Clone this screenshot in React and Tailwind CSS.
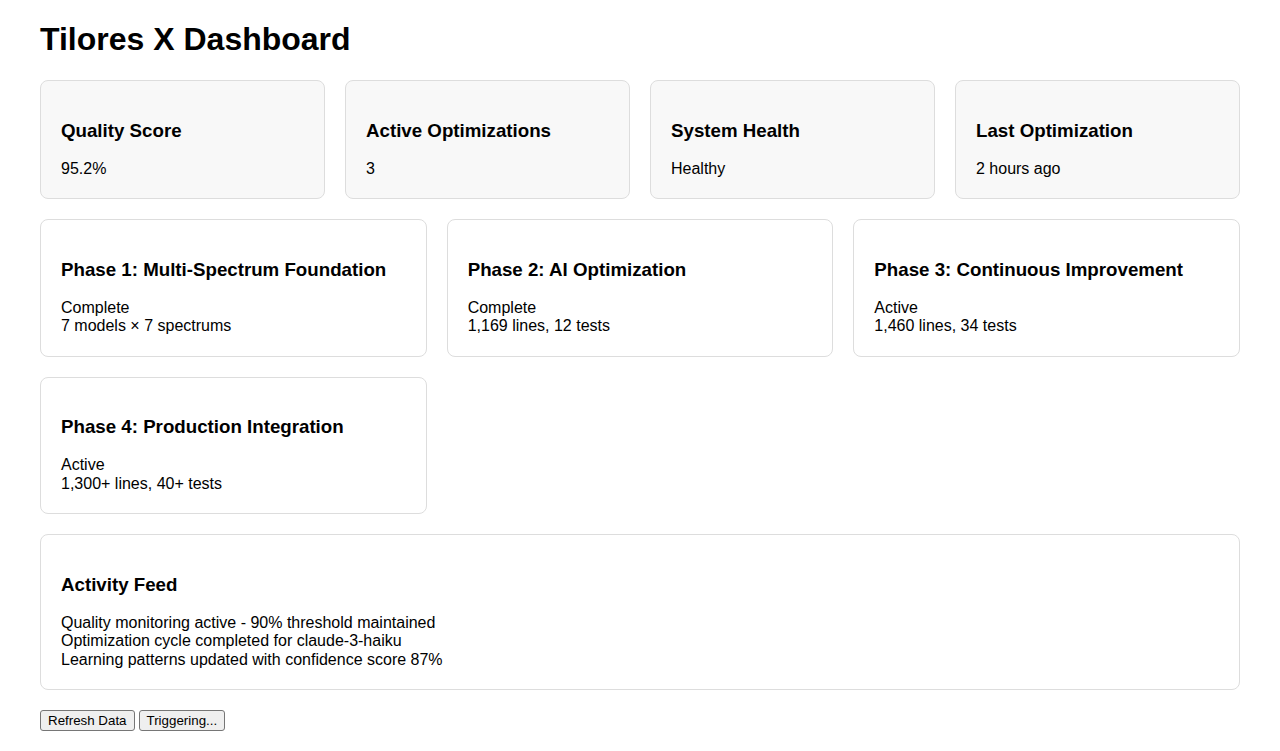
export default function App() {
  const metrics = [
    ["Quality Score", "95.2%"],
    ["Active Optimizations", "3"],
    ["System Health", "Healthy"],
    ["Last Optimization", "2 hours ago"],
  ];
  const phases = [
    ["Phase 1: Multi-Spectrum Foundation", "Complete", "7 models × 7 spectrums"],
    ["Phase 2: AI Optimization", "Complete", "1,169 lines, 12 tests"],
    ["Phase 3: Continuous Improvement", "Active", "1,460 lines, 34 tests"],
    ["Phase 4: Production Integration", "Active", "1,300+ lines, 40+ tests"],
  ];
  const h3 = "text-[18.72px] font-bold leading-[21.3px] my-[18.72px]";
  const btn =
    "inline-block bg-[#efefef] border border-[#767676] rounded-[3px] px-[7px] py-[1px] text-[13.333px] leading-[17px] text-black";
  return (
    <div className="px-10 bg-white text-black font-['Liberation_Sans',Arial,sans-serif] text-[16px] leading-[18.4px]">
      <h1 className="text-[32px] font-bold leading-[37px] pt-[21px] mb-[22px]">Tilores X Dashboard</h1>
      <div className="grid grid-cols-4 gap-5 mb-5">
        {metrics.map(([t, v]) => (
          <div key={t} className="border border-[#dddddd] rounded-lg bg-[#f8f8f8] px-5 pb-5 pt-5">
            <h3 className={h3}>{t}</h3>
            <div>{v}</div>
          </div>
        ))}
      </div>
      <div className="grid grid-cols-3 gap-5 mb-5">
        {phases.map(([t, s, d]) => (
          <div key={t} className="border border-[#dddddd] rounded-lg bg-white p-5">
            <h3 className={h3}>{t}</h3>
            <div>{s}</div>
            <div>{d}</div>
          </div>
        ))}
      </div>
      <div className="border border-[#dddddd] rounded-lg bg-white p-5 mb-5">
        <h3 className={h3}>Activity Feed</h3>
        <div>Quality monitoring active - 90% threshold maintained</div>
        <div>Optimization cycle completed for claude-3-haiku</div>
        <div>Learning patterns updated with confidence score 87%</div>
      </div>
      <div className="flex gap-1 font-['Liberation_Sans',Arial,sans-serif]">
        <button className={btn}>Refresh Data</button>
        <button className={btn}>Triggering...</button>
      </div>
    </div>
  );
}
